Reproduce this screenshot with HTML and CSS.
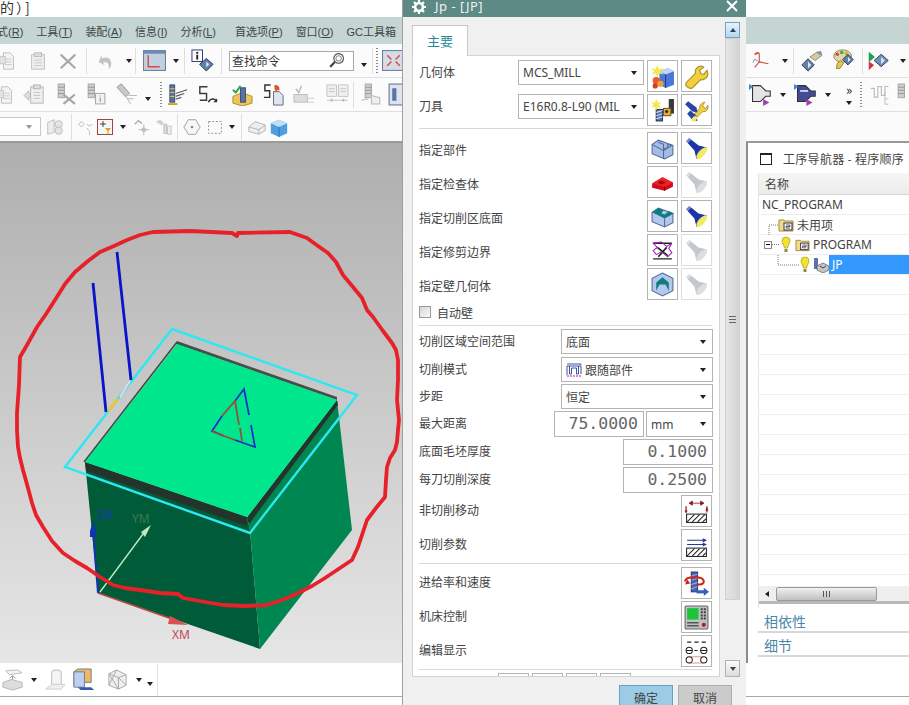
FILE: index.html
```html
<!DOCTYPE html>
<html lang="zh">
<head>
<meta charset="utf-8">
<title>Jp - [JP]</title>
<link rel="stylesheet" href="styles.css">
</head>
<body>
<svg class="sprite" aria-hidden="true">
  <symbol id="torch" viewBox="0 0 24 24"><path d="M2 5L5 2L14 9L22 11L12 22L10 14Z" fill="currentColor"/><path d="M2 5L5 2L7 3.500L3.500 7Z" fill="#fff" opacity=".4"/><ellipse cx="17" cy="16.500" rx="7" ry="3" transform="rotate(-48 17 16.500)" fill="var(--lens,#c9c9cf)"/></symbol>
  <symbol id="doc" viewBox="0 0 22 22"><path d="M6 2h7l4 4v14H6z" fill="#f4f4f4" stroke="#bcbcbc"/><path d="M8 9h7M8 12h7M8 15h7" stroke="#c4c4c4"/><path d="M2 6h6v8H2z" fill="#e4e4e4" stroke="#c4c4c4"/></symbol>
  <symbol id="cyl" viewBox="0 0 22 22"><rect x="4" y="1" width="6" height="13" fill="#cfcfcf" stroke="#aaa"/><path d="M4 4h6M4 7h6M4 10h6" stroke="#999"/></symbol>
  <symbol id="bulb" viewBox="0 0 10 18"><path d="M5 1a4 4 0 0 1 4 4c0 2-2 4-2.500 7h-3C3 9 1 7 1 5a4 4 0 0 1 4-4z" fill="#f4e22a" stroke="#a89a20" stroke-width=".7"/><rect x="3.500" y="13" width="3" height="3" fill="#8a8a50"/></symbol>
  <symbol id="folder" viewBox="0 0 16 14"><path d="M1 2h5l1 1h8v10H1z" fill="#f3d98c" stroke="#a88c3c"/><rect x="6" y="5" width="8" height="7" fill="#fff" stroke="#334"/><path d="M8 7h4v1.500H8V10h4" fill="none" stroke="#334" stroke-width=".8"/></symbol>
</svg>

<div class="app">
  <div class="titlebar"><span class="apptitle">的）]</span></div>

  <nav class="menubar">
    <span class="m">式(<u>R</u>)</span>
    <span class="m">工具(<u>T</u>)</span>
    <span class="m">装配(<u>A</u>)</span>
    <span class="m">信息(<u>I</u>)</span>
    <span class="m m-wide">分析(<u>L</u>)</span>
    <span class="m">首选项(<u>P</u>)</span>
    <span class="m">窗口(<u>O</u>)</span>
    <span class="m">GC工具箱</span>
  </nav>

  <div class="toolbar">
    <div class="tools t1l">
      <svg class="t"><use href="#doc"/></svg>
      <svg class="t" viewBox="0 0 22 22"><rect x="4" y="4" width="14" height="16" fill="#eee" stroke="#bbb"/><rect x="7" y="2" width="8" height="4" fill="#ddd" stroke="#bbb"/><path d="M7 10h8M7 13h8M7 16h8" stroke="#c6c6c6"/></svg>
      <svg class="t" viewBox="0 0 22 22"><path d="M3 4l16 15M19 4L3 19" stroke="#a9a9a9" stroke-width="2.400"/></svg>
      <i class="sep"></i>
      <svg class="t" viewBox="0 0 22 22"><path d="M4 12l3-7 1 3c5-2 10 0 10 6 0 3-2 5-3 6 1-5-1-9-6-7l2 3z" fill="#c4c4c4"/></svg>
      <i class="dd end"></i>
      <i class="sep"></i>
      <svg class="t t-lg" viewBox="0 0 22 20"><rect x=".5" y=".5" width="21" height="19" fill="#c2cfe0" stroke="#6a7f9c"/><rect x=".5" y=".5" width="21" height="3" fill="#6d8cb5"/><path d="M5 5v11h11" fill="none" stroke="#d8483c" stroke-width="1.300"/></svg>
      <i class="dd"></i>
      <i class="sep"></i>
      <svg class="t t-lg" viewBox="0 0 24 24"><rect x="1" y="1" width="11" height="12" fill="#fff" stroke="#2a3a7a"/><rect x="5.500" y="3" width="2" height="2" fill="#223"/><rect x="5.500" y="6" width="2" height="5" fill="#223"/><path d="M16 10l7 6-7 7-7-7z" fill="#5d80ad" stroke="#334"/><path d="M16 13l3 3-3 3z" fill="#dfe8f2"/></svg>
      <i class="sep"></i>
      <div class="search"><span>查找命令</span><svg class="lens" viewBox="0 0 16 16"><circle cx="10" cy="6" r="4.500" fill="#fff" stroke="#444"/><circle cx="10" cy="6" r="2.500" fill="none" stroke="#999"/><path d="M6.500 9.500L2 14" stroke="#444" stroke-width="2"/></svg></div>
      <i class="dd low"></i>
      <i class="sep"></i>
      <i class="grip"></i>
      <svg class="t t-lg" viewBox="0 0 22 20"><rect x=".5" y=".5" width="21" height="19" fill="#d5dce8" stroke="#6a7f9c"/><path d="M5 5l4 4M17 5l-4 4M5 15l4-4M17 15l-4-4" stroke="#d8483c" stroke-width="1.300"/></svg>
    </div>
    <div class="tools t1r">
      <svg class="t" viewBox="0 0 22 22"><path d="M8 12V3M8 12l10 2M8 12l-5 6" stroke="#c05040" stroke-width="1.200" fill="none"/><path d="M8 12l-5-3-2 4" stroke="#8a8a8a" fill="none"/><path d="M3 4c2-2 4-2 5-1" stroke="#d85030" stroke-width="2" fill="none"/></svg>
      <i class="dd"></i>
      <i class="sep"></i>
      <svg class="t t-lg" viewBox="0 0 26 26"><path d="M8 11l7 7-7 7-7-7z" fill="#5d80ad" stroke="#334"/><path d="M8 14l3.500 4L8 22z" fill="#dfe8f2"/><path d="M10 9l9-6 5 4-8 6z" fill="#d9c7a0" stroke="#887"/><path d="M18 4l4-2 2 3-3 2z" fill="#7f8fc0"/></svg>
      <svg class="t t-lg" viewBox="0 0 26 26"><ellipse cx="12" cy="8" rx="10" ry="7" fill="#e2d6ad" stroke="#8a7a40"/><circle cx="6" cy="6" r="2" fill="#d44"/><circle cx="11" cy="4" r="2" fill="#4a4"/><circle cx="16" cy="5" r="2" fill="#c8b020"/><path d="M6 16l4-3 3 3-4 6H5z" fill="#e8c840" stroke="#8a7a40"/><path d="M18 6l6 6-6 6-6-6z" fill="#5d80ad" stroke="#334"/><path d="M18 9l3 3-3 3z" fill="#dfe8f2"/></svg>
      <i class="sep"></i>
      <svg class="t t-lg" viewBox="0 0 26 24"><path d="M2 2l7 6-7 6z" fill="#1fa050"/><path d="M2 13l6 4-6 6z" fill="#d03040"/><path d="M16 5l8 7-8 7-8-7z" fill="#6d90bd" stroke="#334"/><path d="M16 8l4 4-4 4z" fill="#dfe8f2"/></svg>
      <i class="dd end"></i>
    </div>
  </div>

  <div class="toolbar">
    <div class="tools t2l">
      <svg class="t"><use href="#doc"/></svg>
      <svg class="t t-lg" viewBox="0 0 24 24"><path d="M1 13l5-5v3h3v4H6v3z" fill="#ddd" stroke="#bbb"/><rect x="8" y="4" width="13" height="17" fill="#f0f0f0" stroke="#b5b5b5"/><rect x="11" y="2" width="7" height="4" fill="#ddd" stroke="#b5b5b5"/><path d="M11 10h7M11 13h7M11 16h7" stroke="#c6c6c6"/></svg>
      <svg class="t t-lg" viewBox="0 0 22 22"><use href="#cyl"/><path d="M9 11l11 9M20 11L9 20" stroke="#a4a4a4" stroke-width="2"/></svg>
      <svg class="t t-lg" viewBox="0 0 22 22"><use href="#cyl"/><rect x="11" y="10" width="9" height="10" fill="#f3f3f3" stroke="#aaa"/><path d="M15.500 12v1M15.500 14v4" stroke="#888"/></svg>
      <svg class="t t-lg" viewBox="0 0 22 22"><path d="M1 4l4-3 8 9-4 3z" fill="#c9c9c9" stroke="#aaa"/><path d="M9 12l5 8M12 12h8M11 15h6" stroke="#bbb"/></svg>
      <i class="dd low"></i>
      <i class="grip"></i>
      <svg class="t t-lg" viewBox="0 0 24 24"><rect x="3" y="2" width="5" height="18" fill="#5a74a8" stroke="#334a70"/><path d="M3 6h5M3 10h5M3 14h5" stroke="#e8c840"/><path d="M9 11l12-4M9 14l9-3M9 17l6-2" stroke="#556" stroke-width="1.200"/><path d="M1 22h10" stroke="#c8a830" stroke-width="2"/></svg>
      <svg class="t t-lg" viewBox="0 0 24 24"><path d="M12 3H4v7h7v7H4" fill="none" stroke="#3a3a3a" stroke-width="1.500" transform="translate(0 1)"/><path d="M13 20a5 5 0 0 1 9-1" fill="none" stroke="#333" stroke-width="1.600"/><path d="M22 16v4h-4z" fill="#333"/></svg>
      <svg class="t t-lg" viewBox="0 0 24 24"><path d="M2 14l10-4 10 4v7l-10 3-10-3z" fill="#ecc55c" stroke="#b08f30"/><rect x="10" y="5" width="5" height="15" fill="#5a74a8" stroke="#334a70"/><path d="M2 7l3 3 5-7" fill="none" stroke="#28a848" stroke-width="2"/></svg>
      <svg class="t t-lg" viewBox="0 0 24 24"><path d="M9 2H3v6h5v7H2" fill="none" stroke="#333" stroke-width="1.500"/><path d="M12 9h6l4 4v10H12z" fill="#dfe6f2" stroke="#667"/><path d="M13 2c4 0 6 2 5 6l-2-1-1 3-2-4z" fill="#d8582c"/></svg>
      <svg class="t t-lg" viewBox="0 0 24 24"><path d="M4 6l3 4 3-7" fill="none" stroke="#bbb" stroke-width="1.500"/><path d="M2 12h14v8H2z" fill="#ddd" stroke="#bbb"/><path d="M16 16h7M16 20h7" stroke="#ccc"/></svg>
      <svg class="t t-lg" viewBox="0 0 24 24"><path d="M1 2h10v12H1zM13 2h10v12H13z" fill="#f0f0f0" stroke="#c4c4c4"/><path d="M3 6h6M3 9h6M15 6h6M15 9h6M1 18h22" stroke="#c4c4c4"/><path d="M8 18l-3-2v4zM16 18l3-2v4z" fill="#bbb"/></svg>
      <i class="sep"></i>
      <svg class="t t-lg" viewBox="0 0 22 22"><use href="#cyl"/><path d="M1 17c2-2 4-2 6-1" stroke="#bbb" fill="none"/><path d="M10 12l8 2v6h-8z" fill="#eee" stroke="#bbb"/></svg>
      <svg class="t t-lg" viewBox="0 0 22 22"><rect x="2" y="1" width="14" height="20" fill="#dde3ef" stroke="#68748c"/><rect x="5" y="5" width="4" height="12" fill="#5a74a8"/></svg>
    </div>
    <div class="tools t2r">
      <svg class="t t-lg" viewBox="0 0 26 26"><path d="M4 5h9l6 6h5v6h-5l-6 6H4z" fill="#e4e4e4" stroke="#333" stroke-width="1.200" transform="translate(0 -2)"/><path d="M0 1l5 3-5 4z" fill="#3a8ad0"/><path d="M16 18l7 4-7 4z" fill="#a040b0"/></svg>
      <i class="dd"></i>
      <svg class="t t-lg" viewBox="0 0 26 26"><path d="M4 5h9l6 6h5v6h-5l-6 6H4z" fill="#424c96" stroke="#333" stroke-width="1.200" transform="translate(0 -2)"/><path d="M7 8h9v2H7z" fill="#dde"/><path d="M0 1l5 3-5 4z" fill="#3a8ad0"/><path d="M14 18l7 4-7 4z" fill="#a040b0"/></svg>
      <i class="dd"></i>
      <div class="more"><span>»</span><i class="dd"></i></div>
      <i class="grip"></i>
      <svg class="t t-lg" viewBox="0 0 26 26"><path d="M2 6h4v10h4V4h4v10h4V4h4" fill="none" stroke="#bbb" stroke-width="1.300"/><path d="M18 10v14h4M18 18h4" stroke="#bbb" fill="none"/></svg>
      <svg class="t t-lg" viewBox="0 0 22 22"><use href="#cyl"/></svg>
    </div>
  </div>

  <div class="toolbar toolbar-last">
    <div class="tools t3l">
      <div class="combo"><i class="dd soft"></i></div>
      <svg class="t" viewBox="0 0 22 22"><path d="M3 6l7-3v14l-7 2z" fill="#eee" stroke="#bbb"/><circle cx="15" cy="8" r="4" fill="#e4e4e4" stroke="#bbb"/><circle cx="15" cy="15" r="4" fill="#e4e4e4" stroke="#bbb"/></svg>
      <i class="sep"></i>
      <svg class="t" viewBox="0 0 22 22"><path d="M4 8l3-3 3 3-3 3zM13 8l3 2 3-2" stroke="#b4b4b4" fill="none"/><path d="M13 12l3 4v4" stroke="#bbb" fill="none"/></svg>
      <svg class="t t-sm" viewBox="0 0 16 16"><rect x=".5" y=".5" width="15" height="15" fill="#f6f6f6" stroke="#a0443c"/><path d="M6 2v6M3 5h6" stroke="#444"/><path d="M8 9h6l-2.500 3v3h-1v-3z" fill="#e89a20"/></svg>
      <i class="dd"></i>
      <svg class="t" viewBox="0 0 22 22"><path d="M3 8l4-4 4 3" stroke="#aaa" fill="none" stroke-width="1.500"/><path d="M13 8v12M7 14h12" stroke="#b4b4b4"/><circle cx="13" cy="14" r="2" fill="none" stroke="#aaa"/></svg>
      <svg class="t" viewBox="0 0 22 22"><path d="M3 5l5-2 4 4-3 2z" fill="#d0d0d0"/><rect x="12" y="8" width="3" height="10" fill="#ddd" stroke="#bbb"/><rect x="16" y="10" width="4" height="9" fill="#eee" stroke="#c4c4c4"/></svg>
      <i class="sep"></i>
      <svg class="t" viewBox="0 0 22 22"><path d="M7 3h8l5 8-5 8H7l-5-8z" fill="#f8f8f8" stroke="#999"/><circle cx="11" cy="11" r="1.500" fill="#888"/></svg>
      <svg class="t" viewBox="0 0 22 22"><rect x="4" y="5" width="14" height="13" fill="none" stroke="#888" stroke-dasharray="2 2"/></svg>
      <i class="dd"></i>
      <i class="sep"></i>
      <svg class="t" viewBox="0 0 22 22"><path d="M2 11l7-6 11 4v6l-7 4-11-3z" fill="#eee" stroke="#b0b0b0"/><path d="M2 11l11 3v5M13 14l7-5" fill="none" stroke="#b0b0b0"/></svg>
      <svg class="t" viewBox="0 0 22 22"><path d="M2 7l9-4 9 4v11l-9 4-9-4z" fill="#4f9fe0"/><path d="M2 7l9 4 9-4-9-4z" fill="#bfe0f8"/><path d="M11 11v11" stroke="#2a70b0"/></svg>
    </div>
  </div>

  <div class="workspace">
    <div class="viewport">
      <svg class="scene" viewBox="0 143 402 520" preserveAspectRatio="none">
        <defs><linearGradient id="bg" x1="0" y1="0" x2="0" y2="1"><stop offset="0" stop-color="#aeaeae"/><stop offset="1" stop-color="#e6e6e6"/></linearGradient></defs>
        <rect x="0" y="143" width="402" height="520" fill="url(#bg)"/>
        <polygon points="85,462 247,517 250,530 260,649 98,593" fill="#005c38"/>
        <polygon points="247,517 337,400 352,530 260,649 250,530" fill="#008650"/>
        <polygon points="85,462 247,517 247,526 86,471" fill="#24342d"/>
        <polygon points="247,518 337,400 338,405 249,524" fill="#24342d"/>
        <polygon points="177,341 337,397 337,400 176,344" fill="#44504a"/>
        <polygon points="177,344 337,400 247,517 85,462" fill="#00e68c"/>
        <path d="M177 342L84 462" stroke="#3a4a44" stroke-width="1.500"/>
        <polygon points="172,329 357,395 250,533 65,467" fill="none" stroke="#2de8f0" stroke-width="2.400"/>
        <path d="M93 283L106 412M117 252L131 380" stroke="#0a14c8" stroke-width="2.800"/>
        <path d="M108 411L118 399" stroke="#e8c830" stroke-width="2.800"/>
        <path d="M120 397L130 381" stroke="#f4d8ee" stroke-width="1.500"/>
        <path d="M235 401L244 389L249 415M251 425L255 447L235 440M224 436L212 431L222 416" fill="none" stroke="#1a2ac8" stroke-width="1.700"/>
        <path d="M222 416L235 401L239 425M240 428L242 441M235 440L224 436L212 431" fill="none" stroke="#9c4a3c" stroke-width="1.700"/>
        <path d="M98 593L93 530" stroke="#1035b0" stroke-width="2"/>
        <path d="M93 521l3 10 0 6h-6l0-6z" fill="#1035b0"/>
        <text x="96" y="519" class="ax ax-z">ZM</text>
        <text x="132" y="523" class="ax ax-y">YM</text>
        <path d="M100 592L146 530" stroke="#c4eec4" stroke-width="1.300"/>
        <path d="M151 525l-10 7 4 5z" fill="#c4e4c4"/>
        <path d="M98 593L172 619" stroke="#b4463c" stroke-width="1.800"/>
        <path d="M170 616l18 9-20 -1z" fill="#d85050"/>
        <text x="172" y="639" class="ax ax-x">XM</text>
        <path class="ring" d="M153 232L190 231L232 233L237 236L238 233L290 232L307 238L318 246L328 253L336 262L343 275L353 287L362 298L367 310L373 317L383 331L392 343L396 350L398 360L398 380L397 400L399 420L398 430L397 442L395 450L390 458L387 467L386 480L385 497L376 508L367 520L362 535L358 547L352 560L340 568L325 578L312 586L300 592L285 599L267 605L245 606L223 605L205 602L183 598L178 594L160 593L140 590L125 588L113 585L100 577L87 568L75 561L63 553L52 541L43 527L36 515L32 503L28 488L23 470L20 458L18 447L17 430L17 413L19 385L20 357L27 345L37 327L46 314L55 300L65 284L75 272L88 261L100 252L114 246L127 240L140 235Z"/>
      </svg>
    </div>
    <div class="dialog-slot"></div>
    <aside class="nav">
      <div class="nav-head"><i class="win-ico"></i><span>工序导航器 - 程序顺序</span></div>
      <div class="tree">
        <div class="tree-head">名称</div>
        <div class="tree-row root">NC_PROGRAM</div>
        <div class="tree-row r-unused">
          <svg class="conn" viewBox="0 0 10 20"><path d="M1 30V10H10" fill="none" stroke="#777" stroke-dasharray="1 1"/></svg>
          <svg class="fo"><use href="#folder"/></svg><span>未用项</span>
        </div>
        <div class="tree-row r-prog">
          <i class="minus"></i><i class="dots"></i>
          <svg class="bu"><use href="#bulb"/></svg>
          <svg class="fo"><use href="#folder"/></svg><span>PROGRAM</span>
        </div>
        <div class="tree-row r-op">
          <svg class="conn2" viewBox="0 0 24 20"><path d="M1 0V10H23" fill="none" stroke="#777" stroke-dasharray="1 1"/></svg>
          <svg class="bu"><use href="#bulb"/></svg>
          <svg class="op" viewBox="0 0 16 16"><rect x="1" y="1" width="4" height="11" fill="#5a74a8"/><path d="M4 9l6-3 6 3v4l-6 3-6-3z" fill="#c4c4c4" stroke="#555" stroke-width=".7"/><path d="M7 9l3 2 3-2" fill="none" stroke="#444"/></svg>
          <span class="sel">JP</span>
        </div>
        <div class="tree-blank"></div>
        <div class="hscroll"><i class="tri-left"></i><div class="hthumb"><i class="gl"></i></div></div>
      </div>
      <div class="acc">相依性</div>
      <div class="acc">细节</div>
    </aside>
  </div>

  <div class="statusbar">
    <div class="tools t4">
      <svg class="t t-lg" viewBox="0 0 24 24"><path d="M5 3l12-1 5 3-13 2z" fill="#f4f4f4" stroke="#bbb"/><path d="M12 8v8M9 11l3-3 3 3" stroke="#999" fill="none"/><path d="M2 15l9-3 11 3v5l-10 3-10-3z" fill="#ddd" stroke="#b5b5b5"/></svg>
      <i class="dd"></i>
      <svg class="t t-lg" viewBox="0 0 24 24"><ellipse cx="13" cy="4" rx="5" ry="2" fill="#eee" stroke="#bbb"/><path d="M8 4v14h10V4" fill="#f4f4f4" stroke="#bbb"/><path d="M2 22l6-5h14l-4 5z" fill="#eee" stroke="#ccc"/></svg>
      <svg class="t t-lg" viewBox="0 0 24 24"><path d="M2 4l4-3h14v14H6l-4 4z" fill="#f2b860" stroke="#6a7f9c"/><path d="M2 4h11v16H2z" fill="#bdd0ee" stroke="#6a7f9c"/><path d="M6 20h14l3 3H9z" fill="#3a5ab0"/></svg>
      <svg class="t t-lg" viewBox="0 0 24 24"><path d="M3 6l8-4 10 5v11l-8 4-10-4z" fill="#eee" stroke="#aaa"/><path d="M3 6l10 4 8-3M13 10v12M3 6l10 16M13 10l8 8M3 18l8-16" fill="none" stroke="#aaa"/></svg>
      <i class="dd"></i>
      <i class="dd low"></i>
    </div>
  </div>
  <div class="foot"></div>
</div>

<section class="dialog">
  <header class="dlg-title">
    <svg class="gear" viewBox="0 0 16 16"><circle cx="8" cy="8" r="4.500" fill="none" stroke="#fff" stroke-width="3"/><path d="M8 0v3M8 13v3M0 8h3M13 8h3M2.300 2.300l2 2M11.700 11.700l2 2M13.700 2.300l-2 2M4.300 11.700l-2 2" stroke="#fff" stroke-width="2.500"/></svg>
    <span class="dlg-name">Jp - [JP]</span>
    <svg class="close" viewBox="0 0 12 12"><path d="M1 1l10 10M11 1L1 11" stroke="#fff" stroke-width="2"/></svg>
  </header>
  <div class="dlg-body">
    <div class="dlg-main">
      <div class="tab">主要</div>
      <div class="panel">
        <div class="row top"><span class="lbl lbl-w">几何体</span>
          <div class="sel-box sel-m"><span>MCS_MILL</span><i class="dd"></i></div>
          <div class="ib"><svg viewBox="0 0 24 24"><path d="M9 7l8-3 6 3v13l-8 3-6-3z" fill="#4a78d8"/><path d="M9 7l6 3 8-3-6-3z" fill="#c4d6f8"/><path d="M15 10v13" stroke="#23407a"/><path d="M7 1l1.500 4L13 4l-3 3 3 3-4.500-1L7 13l-1.500-4L1 10l3-3-3-3 4.500 1z" fill="#f4e84c"/><circle cx="6" cy="16" r="3.500" fill="#e85a30"/><circle cx="10" cy="19" r="3" fill="#f0a030"/><circle cx="5" cy="21" r="2.500" fill="#d04030"/></svg></div>
          <div class="ib"><svg viewBox="0 0 24 24"><path d="M2 21c-1-2 0-3 1-4l8-8c-1-4 2-7 6-7l2 1-4 3 1 3 3 1 3-4 1 3c0 4-4 7-7 6l-8 8c-2 1-4 0-6-2z" fill="#f2cf3c" stroke="#a88a20" stroke-width="1"/></svg></div>
        </div>
        <div class="row top"><span class="lbl lbl-w">刀具</span>
          <div class="sel-box sel-m"><span>E16R0.8-L90 (MIL</span><i class="dd"></i></div>
          <div class="ib"><svg viewBox="0 0 24 24"><rect x="18" y="1" width="5" height="14" fill="#3a3a3a"/><rect x="6" y="11" width="6" height="11" fill="#5a74b8" stroke="#234"/><path d="M6 14l6-2M6 17l6-2M6 20l6-2" stroke="#dde"/><rect x="13" y="10" width="7" height="7" fill="#f0b020" stroke="#654"/><circle cx="16" cy="13" r="1.500" fill="#222"/><path d="M6 1l1.500 3.500L11 3.500 8.500 6.500 11 9.500 7.500 8.500 6 12l-1.500-3.500L1 9.500l2.500-3L1 3.500l3.500 1z" fill="#f4e84c"/></svg></div>
          <div class="ib"><svg viewBox="0 0 24 24"><path d="M9 19c-1-1 0-3 1-4l5-5c0-3 2-6 5-6l-2 3 1 2 2 1 2-3c1 3-2 7-5 6l-5 5c-1 1-3 2-4 1z" fill="#f2cf3c" stroke="#a88a20" stroke-width=".8"/><path d="M1 6l3-3 8 6 1 5-5-1z" fill="#2a45a8"/><path d="M3 15l3-3 6 5 1 5-5-1z" fill="#2a45a8"/><ellipse cx="10" cy="20" rx="3" ry="2" transform="rotate(-45 10 20)" fill="#f2ea60"/></svg></div>
        </div>
        <hr class="div d1">
        <div class="row"><span class="lbl lbl-o">指定部件</span>
          <div class="ib"><svg viewBox="0 0 24 24"><path d="M2 8l6-4 14 5v9l-8 4-12-5z" fill="#a4bbe4" stroke="#50699a"/><path d="M8 6l5 2v5l4-2V8l4 1-8 5v8M2 8l11 6" fill="none" stroke="#50699a"/></svg></div>
          <div class="ib"><svg class="fl-blue"><use href="#torch"/></svg></div>
        </div>
        <div class="row"><span class="lbl lbl-o">指定检查体</span>
          <div class="ib"><svg viewBox="0 0 24 24"><path d="M2 13l10-6 10 5v4l-8 4-12-3z" fill="#d00c18"/><path d="M2 13l12 3 8-4-10-5z" fill="#ee2028"/><path d="M14 16v4" stroke="#700"/><path d="M7 12l4-2 4 2-4 2z" fill="#a0060e"/></svg></div>
          <div class="ib off"><svg class="fl-grey"><use href="#torch"/></svg></div>
        </div>
        <div class="row"><span class="lbl lbl-o">指定切削区底面</span>
          <div class="ib"><svg viewBox="0 0 24 24"><path d="M2 8l6-4 14 5v9l-8 4-12-5z" fill="#b4c8ec" stroke="#50699a"/><path d="M2 8l6-4 5 2-2 3 3 1 4-3 5 2-9 5z" fill="#0e7c80"/><path d="M14 14v8" stroke="#50699a"/></svg></div>
          <div class="ib"><svg class="fl-blue"><use href="#torch"/></svg></div>
        </div>
        <div class="row"><span class="lbl lbl-o">指定修剪边界</span>
          <div class="ib"><svg viewBox="0 0 24 24"><path d="M3 5h18M3 20h18" stroke="#222" stroke-width="1.300"/><path d="M7 9l10 8M16 9L8 18" stroke="#222" stroke-width="1.600"/><path d="M3 5l4 4-4 3 3 4 5-3 6 5 4-4-3-4 3-5-5 3-5-4z" fill="none" stroke="#a020b0"/></svg></div>
          <div class="ib off"><svg class="fl-grey"><use href="#torch"/></svg></div>
        </div>
        <div class="row"><span class="lbl lbl-o">指定壁几何体</span>
          <div class="ib"><svg viewBox="0 0 24 24"><path d="M12 1l10 5v12l-10 5L2 18V6z" fill="#b4c8ec" stroke="#50699a"/><path d="M6 18V10l6-5 6 5v8l-3-6h-6z" fill="#0e7c80"/></svg></div>
          <div class="ib off"><svg class="fl-grey"><use href="#torch"/></svg></div>
        </div>
        <div class="check"><i class="box"></i><span>自动壁</span></div>
        <hr class="div d2">
        <div class="row f f-first"><span class="lbl lbl-f">切削区域空间范围</span><div class="sel-box sel-w"><span>底面</span><i class="dd"></i></div></div>
        <div class="row f"><span class="lbl lbl-f">切削模式</span><div class="sel-box sel-w"><svg class="pat" viewBox="0 0 16 14"><path d="M1 1h14v1M1 3h14M1 3v9M15 3v8M3.500 3v8h2V5h5v6h2V3" fill="none" stroke="#304090" stroke-width=".9"/><path d="M1 13h14" stroke="#a020b0" stroke-dasharray="2 1"/></svg><span>跟随部件</span><i class="dd"></i></div></div>
        <div class="row f"><span class="lbl lbl-f">步距</span><div class="sel-box sel-w"><span>恒定</span><i class="dd"></i></div></div>
        <div class="row f f26"><span class="lbl lbl-f">最大距离</span><div class="num num-w">75.0000</div><div class="sel-box sel-u"><span>mm</span><i class="dd"></i></div></div>
        <div class="row f f26"><span class="lbl lbl-f">底面毛坯厚度</span><div class="num">0.1000</div></div>
        <div class="row f f26"><span class="lbl lbl-f">每刀切削深度</span><div class="num">0.2500</div></div>
        <div class="row c"><span class="lbl lbl-f">非切削移动</span>
          <div class="ib"><svg viewBox="0 0 24 24"><path d="M5 4h14M5 4l3-2v4zM19 4l-3-2v4z" stroke="#8a1a1a" fill="#8a1a1a" stroke-width=".8"/><path d="M2 7v6M22 7v6" stroke="#8a1a1a" stroke-width="1.200"/><path d="M2 14l-1.500-3h3zM22 8l-1.500 3h3z" fill="#8a1a1a"/><rect x="2.500" y="14.500" width="19" height="8" fill="#fff" stroke="#222"/><path d="M3 22l7-7M8 22l7-7M13 22l7-7M18 22l3-3" stroke="#222"/></svg></div>
        </div>
        <div class="row c"><span class="lbl lbl-f">切削参数</span>
          <div class="ib"><svg viewBox="0 0 24 24"><path d="M3 7h18M3 11h16" stroke="#223a90" stroke-width="1"/><path d="M22 7l-4-2v4zM22 11l-4-2v4z" fill="#223a90"/><rect x="2.500" y="14.500" width="19" height="8" fill="#fff" stroke="#222"/><path d="M3 22l7-7M8 22l7-7M13 22l7-7M18 22l3-3" stroke="#222"/></svg></div>
        </div>
        <hr class="div d3">
        <div class="row c"><span class="lbl lbl-f">进给率和速度</span>
          <div class="ib"><svg viewBox="0 0 24 24"><rect x="7" y="1" width="6" height="19" fill="#4a62b0" stroke="#2a3a70"/><path d="M7 5l6-2M7 9l6-2M7 13l6-2M7 17l6-2" stroke="#9fb0e0"/><path d="M1 10c0-3 4-4 9-4s9 1 9 4-4 3-6 3" fill="none" stroke="#c82818" stroke-width="2"/><path d="M3 8l-2 5 5-1z" fill="#c82818"/><path d="M12 20h8" stroke="#3a5ac8" stroke-width="3"/><path d="M19 16l5 4-5 4z" fill="#3a5ac8"/></svg></div>
        </div>
        <div class="row c"><span class="lbl lbl-f">机床控制</span>
          <div class="ib"><svg viewBox="0 0 24 24"><rect x="1" y="1" width="22" height="22" rx="1" fill="#c0c0c0" stroke="#666"/><rect x="3" y="3" width="11" height="11" fill="#1cc43c"/><path d="M16 4h5M16 7h5M16 10h5M16 13h5" stroke="#444" stroke-width="2" stroke-dasharray="2 1"/><path d="M3 17h11M3 20h11" stroke="#555" stroke-width="1.500"/><circle cx="19" cy="19" r="2" fill="#b02020"/></svg></div>
        </div>
        <div class="row c"><span class="lbl lbl-f">编辑显示</span>
          <div class="ib"><svg viewBox="0 0 24 24"><path d="M3 3h4M10 3h4M17 3h4" stroke="#222" stroke-width="1.300"/><circle cx="5" cy="11" r="3" fill="#fff" stroke="#222"/><circle cx="19" cy="11" r="3" fill="#fff" stroke="#222"/><path d="M2 11h6M16 11h6M10 11h3" stroke="#222"/><circle cx="5" cy="20" r="3" fill="#fff" stroke="#222"/><circle cx="19" cy="20" r="3" fill="#fff" stroke="#222"/><path d="M5 17h14M5 23h14" stroke="#c03030" stroke-dasharray="1 1"/></svg></div>
        </div>
        <hr class="div d4">
        <div class="row-bottom"><div class="ib"></div><div class="ib"></div><div class="ib"></div><div class="ib"></div></div>
      </div>
    </div>
    <div class="vscroll">
      <div class="sb-up"><i class="tri-up"></i></div>
      <div class="sb-thumb"><i class="gl-h"></i></div>
      <div class="sb-fill"></div>
      <div class="sb-down"><i class="tri-down"></i></div>
    </div>
  </div>
  <footer class="dlg-foot"><div class="btn ok">确定</div><div class="btn cancel">取消</div></footer>
</section>
</body>
</html>
```

FILE: styles.css
```css
* { box-sizing: border-box; }
html, body { margin: 0; padding: 0; height: 705px; overflow: hidden; background: #fff; }
body { font-family: "Noto Sans CJK SC", "Noto Sans", sans-serif; font-size: 12px; color: #444; }
.sprite { position: absolute; width: 0; height: 0; }
i { display: block; font-style: normal; }
svg { display: block; overflow: hidden; }

.app { display: flex; flex-direction: column; height: 705px; width: 909px; }
.titlebar { height: 17px; background: #fff; }
.apptitle { display: block; font-size: 14px; line-height: 15px; color: #333; letter-spacing: 2px; }

.menubar { height: 27px; background: #c5d5d3; display: flex; align-items: center; gap: 13px; padding-left: 0; font-family: "Liberation Sans", "Noto Sans CJK SC", sans-serif; font-size: 11px; color: #3c4644; white-space: nowrap; overflow: hidden; }
.m { display: block; }
.m:first-child { margin-left: -3px; }
.m-wide { margin-right: 6px; }

.toolbar { display: flex; justify-content: space-between; height: 34px; background: #fbfbfb; border-bottom: 1px solid #e0e0e0; }
.toolbar-last { height: 31px; border-bottom: 2px solid #9a9a9a; }
.tools { display: grid; align-items: center; justify-items: center; height: 100%; }
.t1l { grid-template-columns: 16px 44px 16px 20px 18px 18px 6px 32px 12px 4px 32px 6px 135px 10px 6px 4px 28px; width: 402px; }
.t2l { grid-template-columns: 12px 44px 18px 42px 22px 20px 6px 28px 30px 40px 22px 38px 30px 2px 36px 16px; width: 402px; }
.t3l { grid-template-columns: 41px 28px 4px 24px 16px 20px 18px 24px 4px 26px 20px 14px 4px 28px 16px; width: 402px; }
.t1r { grid-template-columns: 32px 14px 2px 36px 26px 12px 20px 18px; width: 163px; }
.t2r { grid-template-columns: 28px 18px 26px 20px 22px 2px 36px 14px; width: 163px; }

.t { width: 20px; height: 20px; flex: none; }
.t-lg { width: 23px; height: 23px; }
.t-sm { width: 16px; height: 16px; }
.dd { width: 0; height: 0; border-left: 3.5px solid transparent; border-right: 3.5px solid transparent; border-top: 4px solid #222; }
.dd.end { justify-self: end; }
.dd.low { margin-top: 8px; }
.dd.soft { border-top-color: #999; }
.sep { width: 1px; height: 26px; background: #dedede; }
.grip { width: 2px; height: 26px; background: repeating-linear-gradient(#8a8a8a 0 1px, transparent 1px 3px); }
.search { width: 125px; height: 20px; border: 1px solid #a8a8a8; background: #fff; display: flex; align-items: center; justify-content: space-between; padding: 0 8px 0 2px; font-size: 12px; color: #333; justify-self: end; margin-right: 5px; }
.lens { width: 17px; height: 17px; }
.more { display: flex; flex-direction: column; align-items: center; gap: 5px; font-size: 13px; line-height: 12px; color: #222; }
.combo { width: 41px; height: 19px; background: #fff; border: 1px solid #c8c8c8; border-left: 0; display: flex; align-items: center; justify-content: flex-end; padding-right: 8px; }

.workspace { display: flex; height: 520px; background: #fff; }
.viewport { width: 402px; flex: none; }
.scene { width: 402px; height: 520px; }
.ring { fill: none; stroke: #e6212a; stroke-width: 3.800px; stroke-linejoin: round; }
.ax { font-family: "Noto Sans", sans-serif; font-size: 12px; }
.ax-z { fill: #1a3ab0; }
.ax-y { fill: #3c7a4c; }
.ax-x { fill: #c8485a; }
.dialog-slot { width: 344px; flex: none; }

.nav { width: 163px; flex: none; border-left: 2px solid #8c8c8c; padding-left: 10px; background: #fff; display: flex; flex-direction: column; }
.nav-head { height: 30px; display: flex; align-items: center; gap: 11px; padding: 1px 0 0 2px; font-size: 12px; letter-spacing: .3px; color: #444; white-space: nowrap; overflow: hidden; }
.win-ico { width: 12px; height: 12px; border: 1px solid #222; border-top-width: 2px; flex: none; }
.tree { display: flex; flex-direction: column; height: 435px; border-left: 1px solid #e4e4e4; overflow: hidden; }
.tree-head { height: 22px; flex: none; background: linear-gradient(#f6f6f6, #ececec); border-bottom: 1px solid #d4d4d4; padding-left: 6px; line-height: 21px; font-size: 12px; color: #444; }
.tree-row { height: 20px; flex: none; display: flex; align-items: center; border-bottom: 1px solid #eee; white-space: nowrap; font-size: 12px; color: #444; }
.root { padding-left: 3px; font-family: "Noto Sans", sans-serif; }
.r-unused { padding-left: 9px; }
.r-unused span { margin-left: 3px; }
.conn { width: 10px; height: 20px; flex: none; }
.fo { width: 16px; height: 14px; flex: none; }
.r-prog { padding-left: 5px; font-family: "Noto Sans", "Noto Sans CJK SC", sans-serif; }
.r-prog .fo { margin-left: 4px; width: 15px; }
.r-prog span { margin-left: 3px; }
.minus { width: 8px; height: 8px; border: 1px solid #888; background: linear-gradient(#000, #000) center / 4px 1px no-repeat #fff; flex: none; }
.dots { width: 8px; height: 1px; background: repeating-linear-gradient(90deg, #777 0 1px, transparent 1px 2px); flex: none; }
.bu { width: 10px; height: 18px; flex: none; margin-left: 1px; }
.r-op { padding-left: 18px; }
.conn2 { width: 24px; height: 20px; flex: none; }
.r-op .bu { margin-left: -1px; }
.op { width: 16px; height: 16px; flex: none; margin-left: 3px; }
.sel { display: block; flex: 1; align-self: stretch; background: #3399ff; color: #fff; padding-left: 3px; line-height: 19px; font-family: "Noto Sans", sans-serif; }
.tree-blank { height: 308px; flex: none; background: repeating-linear-gradient(#fff 0 19px, #efefef 19px 20px); }
.hscroll { flex: none; margin-top: 3px; background: #efefef; display: flex; align-items: center; padding-left: 6px; gap: 7px; border-bottom: 3px solid #b8b8b8; height: 18px; }
.tri-left { width: 0; height: 0; border-top: 3.5px solid transparent; border-bottom: 3.5px solid transparent; border-right: 4px solid #222; }
.hthumb { width: 101px; height: 14px; background: linear-gradient(#f0f0f0, #c0c0c0); border: 1px solid #999; border-radius: 2px; display: flex; align-items: center; justify-content: center; }
.gl { width: 7px; height: 6px; background: repeating-linear-gradient(90deg, #555 0 1px, transparent 1px 3px); }
.acc { height: 24px; flex: none; border-bottom: 2px solid #d8d8d8; font-size: 14px; color: #4a86a8; padding: 2px 0 0 6px; line-height: 20px; }
.tree + .acc { margin-top: 1px; }

.statusbar { height: 34px; background: #fff; border-bottom: 1px solid #a8a8a8; }
.t4 { grid-template-columns: 24px 20px 22px 34px 34px 10px 12px; width: 158px; border-right: 1px solid #e4e4e4; justify-content: start; }
.foot { flex: 1; background: #fff; }

.dialog { position: absolute; left: 402px; top: 0; width: 344px; height: 705px; background: #f0f0f0; border-left: 1px solid #a0a0a0; overflow: hidden; display: flex; flex-direction: column; }
.dlg-title { height: 17px; flex: none; background: #5d8a84; display: flex; align-items: flex-start; padding-left: 9px; color: #eef4f3; }
.gear { width: 14px; height: 14px; flex: none; }
.dlg-name { margin-left: 9px; font-family: "Noto Sans", sans-serif; font-size: 13px; line-height: 13px; letter-spacing: .5px; }
.close { width: 12px; height: 12px; margin-left: auto; margin-right: 8px; flex: none; }
.dlg-body { display: flex; height: 660px; flex: none; padding: 5px 0 0 9px; }
.dlg-main { width: 308px; flex: none; display: flex; flex-direction: column; }
.tab { width: 56px; height: 31px; flex: none; margin-top: 3px; background: #fff; border: 1px solid #c8c8c8; border-bottom: 0; text-align: center; line-height: 29px; font-size: 13px; color: #2a8a9c; position: relative; z-index: 1; }
.panel { height: 622px; margin-top: -1px; background: #fff; border: 1px solid #d4d4d4; padding: 4px 7px 0 6px; overflow: hidden; display: flex; flex-direction: column; }
.row { display: flex; align-items: center; gap: 3px; height: 32px; margin-bottom: 2px; flex: none; justify-content: flex-end; }
.row.top { align-items: flex-start; }
.row.f { height: 25px; }
.row.f26 { height: 26px; }
.f-first { margin-bottom: 3px; }
.lbl { margin-right: auto; white-space: nowrap; font-size: 12px; color: #444; }
.lbl-w { line-height: 23px; }
.lbl-o { padding-top: 2px; }
.lbl-f { line-height: 24px; padding-bottom: 2px; }
.ib { width: 31px; height: 32px; border: 1px solid #b4b4b4; background: #fff; display: flex; align-items: center; justify-content: center; flex: none; }
.ib.off { border-color: #dedede; }
.ib svg { width: 25px; height: 25px; }
.fl-blue { color: #1c36a8; --lens: #f2ea60; }
.fl-grey { color: #c4c8cc; --lens: #dcdee0; }
.sel-box { height: 25px; background: #fff; border: 1px solid #b4b4b4; display: flex; align-items: center; padding: 0 4px; font-size: 12px; color: #444; white-space: nowrap; overflow: hidden; flex: none; }
.sel-box .dd { margin-left: auto; margin-right: 2px; flex: none; border-top-color: #222; }
.sel-m { width: 126px; font-family: "Noto Sans", "Noto Sans CJK SC", sans-serif; }
.sel-w { width: 152px; margin-right: -1px; }
.sel-u { width: 67px; height: 26px; margin-right: -1px; font-family: "Noto Sans", sans-serif; }
.pat { width: 16px; height: 14px; margin-right: 3px; flex: none; }
.num { width: 90px; height: 26px; border: 1px solid #b4b4b4; background: #fff; margin-right: -1px; font-family: "DejaVu Sans Mono", monospace; font-size: 16.500px; line-height: 24px; text-align: right; padding-right: 5px; color: #666; flex: none; }
.num-w { margin-right: -1px; }
.check { display: flex; align-items: center; gap: 6px; height: 20px; flex: none; }
.box { width: 12px; height: 12px; border: 1px solid #999; background: linear-gradient(135deg, #d8d8d8, #f8f8f8); }
.div { border: 0; height: 1px; background: #d8d8d8; margin: 0; flex: none; width: 100%; }
.d1 { margin: 0 0 3px; }
.d2 { margin: 3px 0 3px; }
.d3 { margin: 0 0 3px; }
.d4 { margin: 0 0 3px; }
.row-bottom { display: flex; gap: 3px; margin-left: 79px; flex: none; }
.vscroll { width: 15px; height: 655px; margin-left: 5px; display: flex; flex-direction: column; background: #f2f2f2; }
.sb-up { height: 16px; flex: none; background: linear-gradient(#e6f2fb, #b4d8f0); border: 1px solid #7aa0bc; display: flex; align-items: center; justify-content: center; }
.sb-thumb { height: 562px; flex: none; background: linear-gradient(90deg, #e4e4e4, #d4d4d4); border: 1px solid #d0d0d0; display: flex; align-items: center; justify-content: center; }
.gl-h { width: 7px; height: 7px; background: repeating-linear-gradient(#666 0 1px, transparent 1px 3px); }
.sb-fill { flex: 1; background: #f0f0f0; }
.sb-down { height: 17px; flex: none; background: linear-gradient(#fafafa, #dcdcdc); border: 1px solid #b0b0b0; display: flex; align-items: center; justify-content: center; }
.tri-up, .tri-down { width: 0; height: 0; border-left: 3.5px solid transparent; border-right: 3.5px solid transparent; }
.tri-up { border-bottom: 4px solid #24445a; }
.tri-down { border-top: 4px solid #444; }
.dlg-foot { display: flex; gap: 5px; padding: 8px 14px 0 0; justify-content: flex-end; flex: none; }
.btn { width: 54px; height: 24px; display: flex; align-items: center; justify-content: center; font-size: 12px; color: #444; border: 1px solid #aaa; }
.ok { background: #9ccbe6; border-color: #62a2c4; }
.cancel { background: #cbcbcb; border-color: #aeaeae; }
```
